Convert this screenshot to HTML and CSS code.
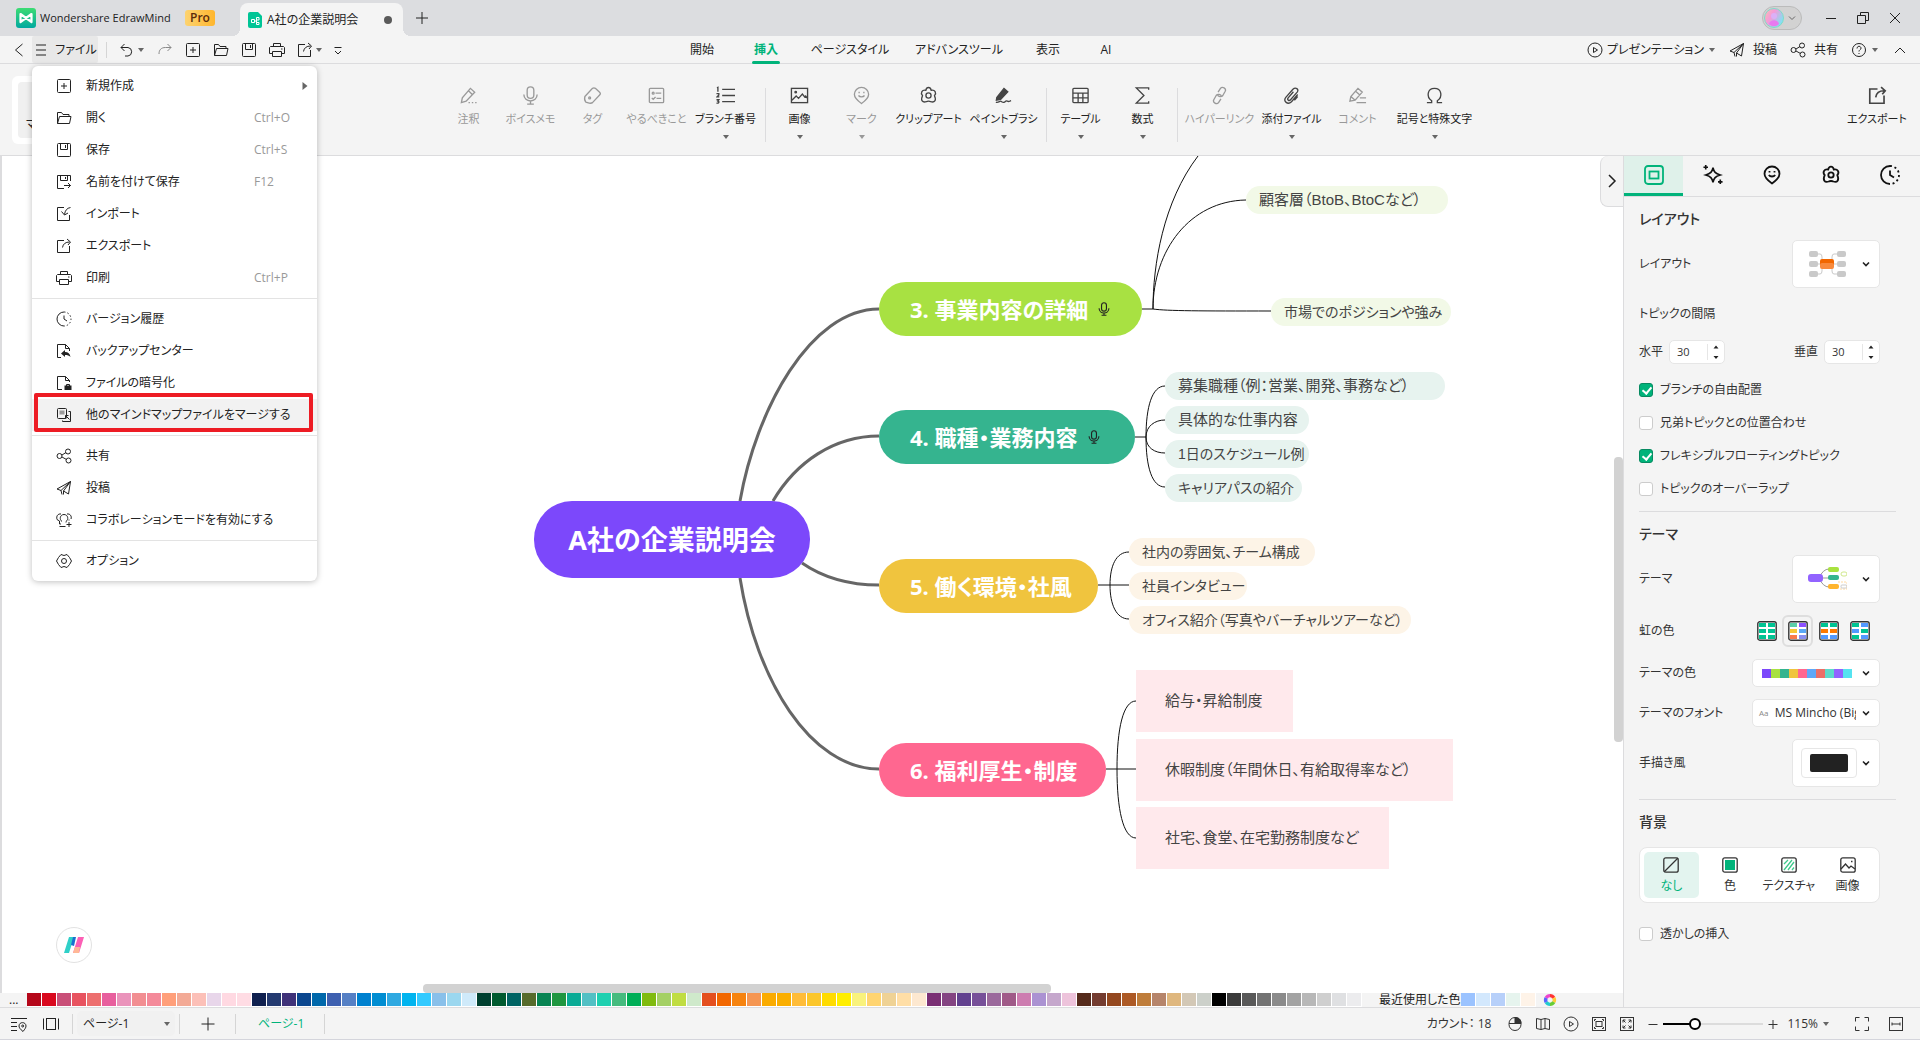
FILE: index.html
```html
<!DOCTYPE html>
<html lang="ja">
<head>
  <meta charset="utf-8">
  <title>Wondershare EdrawMind</title>
  <link rel="stylesheet" href="styles.css">
</head>
<body>
  <!-- Icon sprite -->
  <svg class="sprite" aria-hidden="true">
    <symbol id="i-caret" viewBox="0 0 8 8"><path d="M1 2h6L4 6z" fill="currentColor" stroke="none"/></symbol>
    <symbol id="i-chev" viewBox="0 0 8 8"><path d="M1 2.5l3 3 3-3"/></symbol>
    <symbol id="i-new" viewBox="0 0 16 16"><rect x="1.5" y="1.5" width="13" height="13" rx="1"/><path d="M8 5v6M5 8h6"/></symbol>
    <symbol id="i-open" viewBox="0 0 16 16"><path d="M1.500 13.500v-11h4l1.500 2h6v2M1.500 13.500l2-7h11.500l-1.500 7z"/></symbol>
    <symbol id="i-save" viewBox="0 0 16 16"><rect x="1.500" y="1.500" width="13" height="13" rx="1"/><path d="M4.500 1.500v6h7v-6M9.500 3v3"/></symbol>
    <symbol id="i-saveas" viewBox="0 0 16 16"><path d="M14.500 7V1.500h-13v13H8M4.500 1.500v5h7v-5M9.500 3v2M8 11.500h6.500M12 9l2.500 2.500L12 14"/></symbol>
    <symbol id="i-import" viewBox="0 0 16 16"><path d="M8 1.500H1.500v13h12V9M14.500 1.500C11 2 9 4.500 8.500 8.500M5.500 5.500l3 3.500 3.500-2"/></symbol>
    <symbol id="i-export" viewBox="0 0 16 16"><path d="M8 2.500H1.500v12h12V8M6.500 9.500c.5-3.500 3-5.500 7-5.500M11 1l3.500 3L12 7"/></symbol>
    <symbol id="i-print" viewBox="0 0 16 16"><path d="M4.500 4.500v-3h7v3M3.500 11.500h-3v-6l1-1h13l1 1v6h-3M3.500 9.500h9v5h-9zM12 7h1.500"/></symbol>
    <symbol id="i-history" viewBox="0 0 16 16"><path d="M8 1a7 7 0 1 0 0 14M8 4.500V8l3 2"/><path d="M8 1a7 7 0 0 1 0 14" stroke-dasharray="1.500 2"/></symbol>
    <symbol id="i-backup" viewBox="0 0 16 16"><path d="M5 14.500H1.500v-13h8l4 4V8M9.500 1.500v4h4"/><path d="M5 10.500l4-3.500v2c3 0 5 1.500 5.500 5-1.500-1.500-3-2-5.500-2v2z" fill="currentColor" stroke="none"/></symbol>
    <symbol id="i-lock" viewBox="0 0 16 16"><path d="M6 14.500H1.500v-13h8l4 4V7M9.500 1.500v4h4M10.500 11V9.500h3V11"/><rect x="8.500" y="10.500" width="7" height="4.500" fill="currentColor" stroke="none"/></symbol>
    <symbol id="i-merge" viewBox="0 0 16 16"><rect x="1.500" y="1.500" width="9" height="10" rx="1"/><rect x="3.500" y="3.500" width="5" height="4" fill="#999" stroke="none"/><path d="M12.500 4.500h2v10h-8v-1M9.500 8.500l4 4M9.500 11.500v-3h3"/></symbol>
    <symbol id="i-share" viewBox="0 0 16 16"><circle cx="3.500" cy="8" r="2.500"/><circle cx="12" cy="3.500" r="2.500"/><circle cx="12.500" cy="12.500" r="2.500"/><path d="M6 7l4-2.500M6 9l4.500 2.500"/></symbol>
    <symbol id="i-send" viewBox="0 0 16 16"><path d="M14.500 1.500L1 9l4 1.500L14.500 1.500 12.500 14l-5-3v3.500M5 10.500l1 4M7.500 11l7-9.500"/></symbol>
    <symbol id="i-collab" viewBox="0 0 16 16"><path d="M5 12H3.500V9L1 7.500C0 4 2 1.500 5 2M11 2c3-.5 5 2 4 5M3.500 14.500h6M6 9.500c-3-2-2-7 2-7s5 5 2 7v1M13 10v5M10.500 12.500h5M13 7.500v1"/></symbol>
    <symbol id="i-option" viewBox="0 0 16 16"><path d="M5 1.500l3 1 3-1 2.500 3L15.500 8l-2 3.500-2.500 3-3-1-3 1-2.500-3L.5 8l2-3.500z"/><circle cx="8" cy="8" r="2.500"/></symbol>
    <symbol id="i-undo" viewBox="0 0 16 16"><path d="M5.500 2L2 5.500 5.500 9M2 5.500h7a4.300 4.300 0 0 1 0 8.500H6"/></symbol>
    <symbol id="i-redo" viewBox="0 0 16 16"><path d="M10.500 2L14 5.500 10.500 9M14 5.500H8.500C4 5.500 2 8 2 12"/></symbol>
    <symbol id="i-play" viewBox="0 0 16 16"><circle cx="8" cy="8" r="7"/><path d="M6.500 5.500v5L10.500 8z"/></symbol>
    <symbol id="i-help" viewBox="0 0 16 16"><circle cx="8" cy="8" r="6.500"/><path d="M6 6.500c0-3 4-2.800 4-.3 0 1.500-2 1.500-2 3.300M8 11v1"/></symbol>
    <symbol id="i-note" viewBox="0 0 20 20"><path d="M2.500 17.500l1-5L12 2.500l4.500 4-9 9.500zM10 5l4 4"/><path d="M10 17.500h1.500M13.500 17.500H15M17 17.500h1.500"/></symbol>
    <symbol id="i-mic" viewBox="0 0 20 20"><rect x="6.500" y="1" width="7" height="12" rx="3.500"/><path d="M3 9c0 9 14 9 14 0M10 16v3M6.500 19h7"/></symbol>
    <symbol id="i-tag" viewBox="0 0 20 20"><path d="M2 11l8-8.500c1-.7 2-.7 3 0l4.500 4c1 1 1 2 0 3L10 17.500c-1 .8-2 .8-3.500.5L3 17c-1-1-1.500-4-1-6z"/><circle cx="7" cy="12.500" r="1"/></symbol>
    <symbol id="i-todo" viewBox="0 0 20 20"><rect x="2.500" y="2.500" width="15" height="15" rx="1"/><circle cx="6.500" cy="7.500" r="1"/><path d="M9 7.500h6M5 12.500l1.500 1.500L9 11.500M10 13h5"/></symbol>
    <symbol id="i-num" viewBox="0 0 20 20"><path d="M6.500 3.500H20M6.500 10H20M6.500 16.500H20M1 2l1-.5V6M.5 8h2.500v1.500L1 11.500h2.500M.5 14.500H3L2 16c2 0 1 2.500-1.500 2"/></symbol>
    <symbol id="i-image" viewBox="0 0 20 20"><rect x="1.500" y="2.500" width="17" height="15"/><circle cx="6" cy="6.500" r=".8"/><path d="M2 15l4.500-4.500L9 13l4-4.500 2.500 3 1-1 2 2.500"/></symbol>
    <symbol id="i-mark" viewBox="0 0 20 20"><path d="M10 18.500C5 15 2.500 12 2.500 8.800a7.500 7.300 0 0 1 15 0c0 3.200-2.500 6.200-7.500 9.700z"/><path d="M7.500 6v1.500M12.500 6v1.500M6.800 10c1.500 2 4.900 2 6.400 0"/></symbol>
    <symbol id="i-clip" viewBox="0 0 20 20"><path d="M7.200 4.500C8 .6 12 .6 12.800 4.500c4-.8 6 2.700 3.500 5.700 2.300 5 0 7.600-4 6.300-1-.7-3.600-.7-4.600 0-4 1.300-6.300-1.300-4-6.300C1.200 7.200 3.200 3.700 7.200 4.500z"/><circle cx="10" cy="10" r="2.700"/></symbol>
    <symbol id="i-brush" viewBox="0 0 20 20"><path d="M3 12L10.500 2.500l4 3.500-7.500 8-4.500 1z" fill="currentColor"/><path d="M2 17c2 1 4-1 5-1s2 2 4 1 1-2 3-1 2 0 4-.5"/></symbol>
    <symbol id="i-table" viewBox="0 0 20 20"><rect x="2" y="2.500" width="16" height="15" rx="1"/><path d="M2 7.500h16M2 12.500h16M7.500 7.500v10M12.500 7.500v10"/></symbol>
    <symbol id="i-sigma" viewBox="0 0 20 20"><path d="M16.500 4V2H3.500l8 8-8 8h13v-2"/></symbol>
    <symbol id="i-link" viewBox="0 0 20 20"><path d="M8.500 6.500l2.500-4c2-2.500 6.500 0 5 3l-2.500 4.500c-1.500 2-5 1.500-5.500-1M11.500 13.500l-2.500 4c-2 2.500-6.500 0-5-3l2.500-4.500c1.500-2 5-1.500 5.500 1"/></symbol>
    <symbol id="i-attach" viewBox="0 0 20 20"><path d="M16.500 9l-6.500 7.500c-4 4-9-.5-6-4.500l7.500-8.500c3-3 6.500 0 4.500 3l-7 8c-1.500 1.800-4 0-2.500-2l5.500-6.500M13 15l3.500-4"/></symbol>
    <symbol id="i-comment" viewBox="0 0 20 20"><path d="M2 16l1-5 7.500-8.500 4.500 4L7.500 15zM8 5.500l4.500 4M3 11l4.500 4M12.500 12.500H19M9 17.500h10"/></symbol>
    <symbol id="i-omega" viewBox="0 0 20 20"><path d="M2 17.500h5v-2C1 11.500 2.500 2.500 10 2.500s9 9 3 13v2h5"/></symbol>
    <symbol id="i-panel" viewBox="0 0 20 20"><rect x="1" y="1" width="18" height="18" rx="3"/><rect x="5.500" y="6.500" width="9" height="7"/></symbol>
    <symbol id="i-stars" viewBox="0 0 22 22"><path d="M11 3c1 4.500 2.500 6.500 8 8-5.500 1.500-7 3.500-8 8-1-4.500-2.500-6.500-8-8 5.500-1.500 7-3.500 8-8zM3 0v5M.5 2.500h5M19 16v5M16.500 18.500h5"/></symbol>
    <symbol id="i-clock" viewBox="0 0 20 20"><path d="M10 1a9 9 0 1 0 0 18M10 5.500V10l4 2.500"/><path d="M10 1a9 9 0 0 1 0 18" stroke-dasharray="2 2.700"/></symbol>
    <symbol id="i-none" viewBox="0 0 16 16"><rect x=".8" y=".8" width="14.400" height="14.400" rx="2"/><path d="M1 15L15 1"/></symbol>
    <symbol id="i-fill" viewBox="0 0 16 16"><rect x=".8" y=".8" width="14.400" height="14.400" rx="2"/><path d="M3 3h10v10H3z" fill="#00b37a" stroke="none"/></symbol>
    <symbol id="i-texture" viewBox="0 0 16 16"><rect x=".8" y=".8" width="14.400" height="14.400" rx="2"/><path d="M3 7l4-4M3 13L11 3M7 13l6-8M11 13l2-2.500" stroke="#3fc98c"/></symbol>
    <symbol id="i-pic" viewBox="0 0 16 16"><rect x=".8" y=".8" width="14.400" height="14.400" rx="2"/><path d="M1 12l4.500-5 3.500 4 2-2 4 3M11 4.500h1.500"/></symbol>
    <symbol id="i-outline" viewBox="0 0 16 16"><path d="M0 2.500h16M0 6.500h6M0 10.500h6M0 14.500h6M12 15.500c-3-2.500-4-4-4-5.500 0-4.500 7-4.500 7 0 0 1.500-1 3-3 5.500z"/><circle cx="11.700" cy="10" r="1"/></symbol>
    <symbol id="i-slides" viewBox="0 0 16 16"><rect x="3.500" y="2.500" width="9" height="11"/><path d="M.5 2.500v11M15.500 2.500v11"/></symbol>
    <symbol id="i-mouse" viewBox="0 0 16 16"><rect x="2" y="1.500" width="12" height="13" rx="6"/><path d="M8 1.500c4 0 6 2 6 6H8z" fill="currentColor"/><path d="M2 7.500h12"/></symbol>
    <symbol id="i-map" viewBox="0 0 16 16"><path d="M1.500 2.500l4.500 1 4-1 4.500 1v10l-4.500-1-4 1-4.500-1zM6 3.500v10M10 2.500v10"/></symbol>
    <symbol id="i-fit" viewBox="0 0 16 16"><rect x="1.500" y="1.500" width="13" height="13"/><rect x="5" y="5.500" width="6" height="5"/><path d="M3.500 5V3.500H5M11 3.500h1.500V5M12.500 11v1.500H11M5 12.500H3.500V11"/></symbol>
    <symbol id="i-full" viewBox="0 0 16 16"><rect x="1.500" y="1.500" width="13" height="13"/><path d="M4 6.500V4h2.500M4 4l2.500 2.500M9.500 4H12v2.500M12 4L9.500 6.500M12 9.500V12H9.500M12 12L9.500 9.500M6.500 12H4V9.500M4 12l2.500-2.500"/></symbol>
    <symbol id="i-corners" viewBox="0 0 16 16"><path d="M1.500 5.500v-4h4M10.500 1.500h4v4M14.500 10.500v4h-4M5.500 14.500h-4v-4"/></symbol>
    <symbol id="i-width" viewBox="0 0 16 16"><rect x="1.500" y="1.500" width="13" height="13"/><path d="M4 8h8M4 6.500v3M12 6.500v3"/></symbol>
  </svg>

  <!-- Title bar -->
  <header class="titlebar">
    <svg class="logo" viewBox="0 0 20 20"><defs><linearGradient id="lg" x2="0" y2="1"><stop stop-color="#3ddc73"/><stop offset="1" stop-color="#00a9a0"/></linearGradient></defs><rect width="20" height="20" rx="3" fill="url(#lg)"/><path d="M4.500 14V6l11 8V6l-11 8z" fill="none" stroke="#fff" stroke-width="2.200" stroke-linejoin="round"/></svg>
    <span class="app-name">Wondershare EdrawMind</span>
    <span class="pro">Pro</span>
    <div class="doc-tab">
      <svg class="doc-icon" viewBox="0 0 14 16"><path d="M2 0h8l4 4v10a2 2 0 0 1-2 2H2a2 2 0 0 1-2-2V2a2 2 0 0 1 2-2z" fill="#00c596"/><path d="M3.500 7.500h3v3h-3zM6.500 9H8M8.500 5.500h2.500v2.500H8.500zM8.500 10.500h2.500v2H8.500zM8.500 8v3" fill="none" stroke="#fff"/></svg>
      <span class="doc-name">A社の企業説明会</span>
      <i class="dirty"></i>
    </div>
    <button class="plain add-tab" aria-label="新しいタブ"><svg class="ic" viewBox="0 0 16 16"><path d="M8 2v12M2 8h12"/></svg></button>
    <div class="window-tools">
      <button class="account" aria-label="アカウント"><svg class="avatar" viewBox="0 0 20 20"><defs><linearGradient id="av" x1="0" y1="0" x2="1" y2=".6"><stop stop-color="#f6c2b0"/><stop offset=".45" stop-color="#f59ad8"/><stop offset="1" stop-color="#7fe3f5"/></linearGradient></defs><circle cx="10" cy="10" r="9.500" fill="url(#av)" stroke="#7edcc8"/><circle cx="10" cy="8" r="3" fill="#dcb0f7"/><path d="M5 16c1-5 9-5 10 0-3 3-7 3-10 0z" fill="#e879f0"/></svg><svg class="ic tiny"><use href="#i-chev"/></svg></button>
      <button class="plain" aria-label="最小化"><svg class="ic" viewBox="0 0 16 16"><path d="M3 8.500h10"/></svg></button>
      <button class="plain" aria-label="元に戻す"><svg class="ic" viewBox="0 0 16 16"><path d="M2.500 5.500h8v8h-8zM5.500 5.500v-3h8v8h-3"/></svg></button>
      <button class="plain" aria-label="閉じる"><svg class="ic" viewBox="0 0 16 16"><path d="M3 3l10 10M13 3L3 13"/></svg></button>
    </div>
  </header>

  <!-- Menu bar -->
  <nav class="menubar">
    <div class="quick">
      <button class="plain back" aria-label="戻る"><svg class="ic" viewBox="0 0 16 16"><path d="M11.500 2l-7 6 7 6"/></svg></button>
      <button class="file-btn"><svg class="ic" viewBox="0 0 16 16"><path d="M3 3h10M3 8h10M3 13h10"/></svg>ファイル</button>
      <span class="vsep"></span>
      <button class="plain" aria-label="元に戻す"><svg class="ic"><use href="#i-undo"/></svg><svg class="ic tiny"><use href="#i-caret"/></svg></button>
      <button class="plain dim" aria-label="やり直し"><svg class="ic"><use href="#i-redo"/></svg></button>
      <button class="plain" aria-label="新規"><svg class="ic"><use href="#i-new"/></svg></button>
      <button class="plain" aria-label="開く"><svg class="ic"><use href="#i-open"/></svg></button>
      <button class="plain" aria-label="保存"><svg class="ic"><use href="#i-save"/></svg></button>
      <button class="plain" aria-label="印刷"><svg class="ic"><use href="#i-print"/></svg></button>
      <button class="plain" aria-label="エクスポート"><svg class="ic"><use href="#i-export"/></svg><svg class="ic tiny"><use href="#i-caret"/></svg></button>
      <button class="plain customize" aria-label="カスタマイズ"><svg class="ic" viewBox="0 0 16 16"><path d="M4.500 5.500h7M5 9l3 3 3-3"/></svg></button>
    </div>
    <div class="tabs">
      <a href="#">開始</a>
      <a href="#" class="active">挿入</a>
      <a href="#" class="t-lg">ページスタイル</a>
      <a href="#" class="t-xl">アドバンスツール</a>
      <a href="#">表示</a>
      <a href="#" class="t-sm">AI</a>
    </div>
    <div class="menu-right">
      <button class="plain present"><svg class="ic"><use href="#i-play"/></svg>プレゼンテーション<svg class="ic tiny"><use href="#i-caret"/></svg></button>
      <button class="plain"><svg class="ic"><use href="#i-send"/></svg>投稿</button>
      <button class="plain"><svg class="ic"><use href="#i-share"/></svg>共有</button>
      <button class="plain help" aria-label="ヘルプ"><svg class="ic"><use href="#i-help"/></svg><svg class="ic tiny"><use href="#i-caret"/></svg></button>
      <button class="plain" aria-label="折りたたむ"><svg class="ic" viewBox="0 0 16 16"><path d="M3 11l5-5 5 5"/></svg></button>
    </div>
  </nav>

  <!-- Ribbon -->
  <div class="ribbon">
    <div class="mode-box"><button class="mode">マ</button></div>
    <div class="tools">
      <button class="tool off"><svg class="ic"><use href="#i-note"/></svg>注釈</button>
      <button class="tool off"><svg class="ic"><use href="#i-mic"/></svg>ボイスメモ</button>
      <button class="tool off"><svg class="ic"><use href="#i-tag"/></svg>タグ</button>
      <button class="tool off w-md"><svg class="ic"><use href="#i-todo"/></svg>やるべきこと</button>
      <button class="tool w-lg"><svg class="ic"><use href="#i-num"/></svg>ブランチ番号<svg class="ic tiny"><use href="#i-caret"/></svg></button>
      <span class="rsep"></span>
      <button class="tool"><svg class="ic"><use href="#i-image"/></svg>画像<svg class="ic tiny"><use href="#i-caret"/></svg></button>
      <button class="tool off"><svg class="ic"><use href="#i-mark"/></svg>マーク<svg class="ic tiny"><use href="#i-caret"/></svg></button>
      <button class="tool w-lg"><svg class="ic"><use href="#i-clip"/></svg>クリップアート</button>
      <button class="tool w-xl"><svg class="ic"><use href="#i-brush"/></svg>ペイントブラシ<svg class="ic tiny"><use href="#i-caret"/></svg></button>
      <span class="rsep"></span>
      <button class="tool"><svg class="ic"><use href="#i-table"/></svg>テーブル<svg class="ic tiny"><use href="#i-caret"/></svg></button>
      <button class="tool"><svg class="ic"><use href="#i-sigma"/></svg>数式<svg class="ic tiny"><use href="#i-caret"/></svg></button>
      <span class="rsep"></span>
      <button class="tool off w-xl"><svg class="ic"><use href="#i-link"/></svg>ハイパーリンク</button>
      <button class="tool w-md"><svg class="ic"><use href="#i-attach"/></svg>添付ファイル<svg class="ic tiny"><use href="#i-caret"/></svg></button>
      <button class="tool off w-md"><svg class="ic"><use href="#i-comment"/></svg>コメント</button>
      <button class="tool w-xxl"><svg class="ic"><use href="#i-omega"/></svg>記号と特殊文字<svg class="ic tiny"><use href="#i-caret"/></svg></button>
    </div>
    <button class="tool w-xl export"><svg class="ic"><use href="#i-export"/></svg>エクスポート</button>
  </div>

  <main class="workspace">
    <div class="stage">
      <div class="canvas">
        <svg class="links">
          <g class="trunk">
            <path d="M738 345C754 254 808 153 877 153"/>
            <path d="M771 345C794 306 832 280 877 280"/>
            <path d="M800 407C823 423 848 429 877 429"/>
            <path d="M738 422C754 523 808 613 877 613"/>
          </g>
          <g class="twig">
            <path d="M1140 153h11C1151 109 1161 46 1196 0M1151 153C1151 94 1188 45 1244 44M1151 153C1165 155 1200 155 1269 155"/>
            <path d="M1133 281h11M1163 230C1150 230 1144 251 1144 281S1150 331 1163 331M1163 264C1153 264 1144 270 1144 281S1153 297 1163 297"/>
            <path d="M1096 429h31M1127 396C1114 396 1108 410 1108 429S1114 463 1127 463"/>
            <path d="M1104 613h30M1134 545C1121 545 1115 573 1115 613S1121 682 1134 682"/>
          </g>
        </svg>
        <div class="node root">A社の企業説明会</div>

        <div class="node branch b3">3. 事業内容の詳細<svg class="ic"><use href="#i-mic"/></svg></div>
        <div class="node leaf lime l31">顧客層（BtoB、BtoCなど）</div>
        <div class="node leaf lime dense l32">市場でのポジションや強み</div>

        <div class="node branch b4">4. 職種・業務内容<svg class="ic"><use href="#i-mic"/></svg></div>
        <div class="node leaf mint l41">募集職種（例：営業、開発、事務など）</div>
        <div class="node leaf mint l42">具体的な仕事内容</div>
        <div class="node leaf mint dense l43">1日のスケジュール例</div>
        <div class="node leaf mint dense l44">キャリアパスの紹介</div>

        <div class="node branch b5">5. 働く環境・社風</div>
        <div class="node leaf cream dense l51">社内の雰囲気、チーム構成</div>
        <div class="node leaf cream dense l52">社員インタビュー</div>
        <div class="node leaf cream dense l53">オフィス紹介（写真やバーチャルツアーなど）</div>

        <div class="node branch b6">6. 福利厚生・制度</div>
        <div class="node leaf pink l61">給与・昇給制度</div>
        <div class="node leaf pink l62">休暇制度（年間休日、有給取得率など）</div>
        <div class="node leaf pink l63">社宅、食堂、在宅勤務制度など</div>

        <button class="ai-btn" aria-label="AI"><svg viewBox="0 0 20 16"><path d="M5 0h5L5 16H0z" fill="#2fd0c8"/><path d="M9 0h3l-2 9-3-1z" fill="#1a6fd0"/><path d="M14 0h6l-5 16H9z" fill="#fc5fb5"/><path d="M11 10h5l-1 6H9z" fill="#ffb896"/></svg></button>
        <button class="collapse" aria-label="パネルを閉じる"><svg class="ic" viewBox="0 0 16 16"><path d="M5 2l6 6-6 6"/></svg></button>
        <div class="scroll-v"></div>
        <div class="scroll-h"></div>
      </div>
      <div class="palette">
        <button class="plain more">...</button>
        <div class="swatches" id="swatches"></div>
        <span class="recent-label">最近使用した色</span>
        <div class="swatches" id="recent"></div>
        <svg class="wheel" viewBox="0 0 16 16"><g fill="none" stroke-width="4"><path d="M8 3a5 5 0 0 1 4.300 2.500" stroke="#f33"/><path d="M12.300 5.500a5 5 0 0 1 0 5" stroke="#fc3"/><path d="M12.300 10.500A5 5 0 0 1 8 13" stroke="#6c3"/><path d="M8 13a5 5 0 0 1-4.300-2.500" stroke="#2cc"/><path d="M3.700 10.500a5 5 0 0 1 0-5" stroke="#56f"/><path d="M3.700 5.500A5 5 0 0 1 8 3" stroke="#e4c"/></g></svg>
      </div>
    </div>

    <!-- Format panel -->
    <aside class="panel">
      <div class="panel-tabs">
        <button class="active" aria-label="ページ"><svg class="ic"><use href="#i-panel"/></svg></button>
        <button aria-label="AI"><svg class="ic"><use href="#i-stars"/></svg></button>
        <button aria-label="マーク"><svg class="ic"><use href="#i-mark"/></svg></button>
        <button aria-label="クリップアート"><svg class="ic"><use href="#i-clip"/></svg></button>
        <button aria-label="履歴"><svg class="ic"><use href="#i-clock"/></svg></button>
      </div>

      <section>
        <h3>レイアウト</h3>
        <div class="row flush">
          <span>レイアウト</span>
          <button class="pick tall" aria-label="レイアウト">
            <svg class="thumb" viewBox="0 0 40 28"><path d="M10 4h3q2 0 2 3v14q0 3-2 3h-3M30 4h-3q-2 0-2 3v14q0 3 2 3h3M10 14h20" fill="none" stroke="#c9c9c9"/><g fill="#c9c9c9"><rect x="2" y="1" width="9" height="6" rx="2"/><rect x="2" y="11" width="9" height="6" rx="2"/><rect x="2" y="21" width="9" height="6" rx="2"/><rect x="30" y="1" width="9" height="6" rx="2"/><rect x="30" y="11" width="9" height="6" rx="2"/><rect x="30" y="21" width="9" height="6" rx="2"/></g><rect x="13" y="9" width="14" height="7" rx="2" fill="#f26700"/><rect x="13" y="13" width="14" height="6" rx="2" fill="#f98a3c"/></svg>
            <svg class="ic tiny"><use href="#i-chev"/></svg>
          </button>
        </div>
        <h4>トピックの間隔</h4>
        <div class="row spins">
          <label for="gapX">水平</label>
          <span class="spin"><input type="number" id="gapX" value="30"><svg viewBox="0 0 8 16"><path d="M1.500 4.500h5L4 1.500zM1.500 12h5L4 15z"/></svg></span>
          <label for="gapY" class="second">垂直</label>
          <span class="spin"><input type="number" id="gapY" value="30"><svg viewBox="0 0 8 16"><path d="M1.500 4.500h5L4 1.500zM1.500 12h5L4 15z"/></svg></span>
        </div>
        <label class="check"><input type="checkbox" checked>ブランチの自由配置</label>
        <label class="check"><input type="checkbox">兄弟トピックとの位置合わせ</label>
        <label class="check"><input type="checkbox" checked>フレキシブルフローティングトピック</label>
        <label class="check"><input type="checkbox">トピックのオーバーラップ</label>
      </section>

      <section>
        <h3>テーマ</h3>
        <div class="row flush">
          <span>テーマ</span>
          <button class="pick tall" aria-label="テーマ">
            <svg class="thumb" viewBox="0 0 40 28"><path d="M12 13q4-9 10-9M12 13h10M12 13q4 9 10 9" fill="none" stroke="#999"/><rect x="1" y="9" width="15" height="8" rx="3" fill="#9263ff"/><rect x="21" y="2" width="11" height="5" rx="2" fill="#a8e23f"/><rect x="21" y="10" width="11" height="5" rx="2" fill="#34b48f"/><rect x="21" y="19" width="11" height="5" rx="2" fill="#ffb52e"/><rect x="34" y="7" width="6" height="4" rx="2" fill="none" stroke="#cfe88a"/><path d="M31 17h9v7h-7" fill="none" stroke="#ffd9a0" stroke-dasharray="2 1"/><rect x="34" y="20" width="6" height="3" rx="1" fill="none" stroke="#ccc"/></svg>
            <svg class="ic tiny"><use href="#i-chev"/></svg>
          </button>
        </div>
        <div class="row">
          <span>虹の色</span>
          <div class="rainbow">
            <button aria-label="単色"><svg viewBox="0 0 20 20"><rect x=".8" y=".8" width="18.400" height="18.400" rx="2"/><path d="M2 4h16M2 10h16M2 16h16" stroke="#00c493"/></svg></button>
            <button class="on" aria-label="虹色"><svg viewBox="0 0 20 20"><rect x=".8" y=".8" width="18.400" height="18.400" rx="2"/><path d="M2 4h8" stroke="#5bcfa8"/><path d="M11 4h7" stroke="#8b50ff"/><path d="M2 10h8" stroke="#f6c835"/><path d="M11 10h7" stroke="#5aa8f5"/><path d="M2 16h8" stroke="#f97b4a"/><path d="M11 16h7" stroke="#8a90f0"/></svg></button>
            <button aria-label="行ごと"><svg viewBox="0 0 20 20"><rect x=".8" y=".8" width="18.400" height="18.400" rx="2"/><path d="M2 4h16" stroke="#00c493"/><path d="M2 10h16" stroke="#ff7a00"/><path d="M2 16h16" stroke="#5299ff"/></svg></button>
            <button aria-label="交互"><svg viewBox="0 0 20 20"><rect x=".8" y=".8" width="18.400" height="18.400" rx="2"/><path d="M2 4h8M11 10h7M2 16h8" stroke="#00c493"/><path d="M11 4h7M2 10h8M11 16h7" stroke="#5299ff"/></svg></button>
          </div>
        </div>
        <div class="row">
          <span>テーマの色</span>
          <button class="pick wide" aria-label="テーマの色"><span class="strip" id="themeColors"></span><svg class="ic tiny"><use href="#i-chev"/></svg></button>
        </div>
        <div class="row">
          <label for="themeFont">テーマのフォント</label>
          <div class="pick wide font"><span class="aa">Aa</span><select id="themeFont"><option>MS Mincho (Big)</option></select><svg class="ic tiny"><use href="#i-chev"/></svg></div>
        </div>
        <div class="row">
          <span>手描き風</span>
          <button class="pick tall" aria-label="手描き風"><span class="ink"><i></i></span><svg class="ic tiny"><use href="#i-chev"/></svg></button>
        </div>
      </section>

      <section>
        <h3>背景</h3>
        <div class="bg-types">
          <button class="on"><svg class="ic"><use href="#i-none"/></svg>なし</button>
          <button><svg class="ic"><use href="#i-fill"/></svg>色</button>
          <button><svg class="ic"><use href="#i-texture"/></svg>テクスチャ</button>
          <button><svg class="ic"><use href="#i-pic"/></svg>画像</button>
        </div>
        <label class="check"><input type="checkbox">透かしの挿入</label>
      </section>
    </aside>
  </main>

  <!-- Status bar -->
  <footer class="status">
    <button class="plain" aria-label="アウトライン"><svg class="ic"><use href="#i-outline"/></svg></button>
    <button class="plain" aria-label="スライド"><svg class="ic"><use href="#i-slides"/></svg></button>
    <span class="vsep"></span>
    <div class="page-select"><select aria-label="ページ"><option>ページ-1</option></select><svg class="ic tiny"><use href="#i-caret"/></svg></div>
    <span class="vsep"></span>
    <button class="plain add-page" aria-label="ページを追加"><svg class="ic" viewBox="0 0 16 16"><path d="M8 1.500v13M1.500 8h13"/></svg></button>
    <span class="vsep"></span>
    <a href="#" class="page-tab">ページ-1</a>
    <span class="vsep"></span>
    <div class="status-right">
      <span class="count">カウント： 18</span>
      <button class="plain" aria-label="マウス"><svg class="ic"><use href="#i-mouse"/></svg></button>
      <button class="plain" aria-label="マップ"><svg class="ic"><use href="#i-map"/></svg></button>
      <button class="plain" aria-label="再生"><svg class="ic"><use href="#i-play"/></svg></button>
      <button class="plain" aria-label="合わせる"><svg class="ic"><use href="#i-fit"/></svg></button>
      <button class="plain" aria-label="全体表示"><svg class="ic"><use href="#i-full"/></svg></button>
      <div class="zoom">
        <button class="plain" aria-label="縮小"><svg class="ic" viewBox="0 0 12 12"><path d="M1.500 6.500h9"/></svg></button>
        <input type="range" min="0" max="100" value="29" aria-label="ズーム">
        <button class="plain" aria-label="拡大"><svg class="ic" viewBox="0 0 12 12"><path d="M1.500 6.500h9M6 2v9"/></svg></button>
        <button class="plain percent">115%<svg class="ic tiny"><use href="#i-caret"/></svg></button>
      </div>
      <button class="plain corners" aria-label="全画面"><svg class="ic"><use href="#i-corners"/></svg></button>
      <button class="plain" aria-label="幅に合わせる"><svg class="ic"><use href="#i-width"/></svg></button>
    </div>
  </footer>

  <!-- File menu -->
  <div class="file-menu">
    <button><svg class="ic"><use href="#i-new"/></svg>新規作成<svg class="ic tiny sub" viewBox="0 0 8 8"><path d="M1.500 0v8l5-4z" fill="currentColor" stroke="none"/></svg></button>
    <button><svg class="ic"><use href="#i-open"/></svg>開く<kbd>Ctrl+O</kbd></button>
    <button><svg class="ic"><use href="#i-save"/></svg>保存<kbd>Ctrl+S</kbd></button>
    <button><svg class="ic"><use href="#i-saveas"/></svg>名前を付けて保存<kbd>F12</kbd></button>
    <button><svg class="ic"><use href="#i-import"/></svg>インポート</button>
    <button><svg class="ic"><use href="#i-export"/></svg>エクスポート</button>
    <button><svg class="ic"><use href="#i-print"/></svg>印刷<kbd>Ctrl+P</kbd></button>
    <hr>
    <button><svg class="ic"><use href="#i-history"/></svg>バージョン履歴</button>
    <button><svg class="ic"><use href="#i-backup"/></svg>バックアップセンター</button>
    <button><svg class="ic"><use href="#i-lock"/></svg>ファイルの暗号化</button>
    <button class="marked"><svg class="ic"><use href="#i-merge"/></svg>他のマインドマップファイルをマージする</button>
    <hr>
    <button><svg class="ic"><use href="#i-share"/></svg>共有</button>
    <button><svg class="ic"><use href="#i-send"/></svg>投稿</button>
    <button><svg class="ic"><use href="#i-collab"/></svg>コラボレーションモードを有効にする</button>
    <hr>
    <button><svg class="ic"><use href="#i-option"/></svg>オプション</button>
  </div>

  <script src="palette.js"></script>
</body>
</html>
```

FILE: styles.css
```css
:root {
  --green: #00b37a;
  --bar: #f4f4f4;
  --line: #dcdcde;
  --text: #222;
  --control: #e6e6e6;
}

* {
  box-sizing: border-box;
}

body {
  margin: 0;
  height: 100vh;
  display: flex;
  flex-direction: column;
  overflow: hidden;
  background: var(--bar);
  color: var(--text);
  font-family: "Open Sans", "Noto Sans CJK JP", sans-serif;
  font-size: 12px;
  line-height: 16px;
  font-feature-settings: "palt";
}

button,
input,
select {
  font: inherit;
  font-feature-settings: inherit;
  color: inherit;
  margin: 0;
}

button {
  padding: 0;
  border: none;
  background: none;
  white-space: nowrap;
  cursor: pointer;
}

a {
  color: inherit;
  text-decoration: none;
}

.sprite {
  display: none;
}

.ic {
  width: 16px;
  height: 16px;
  flex: none;
  fill: none;
  stroke: currentColor;
  overflow: visible;
}

.tiny {
  width: 8px;
  height: 8px;
  color: #666;
}

.plain {
  display: flex;
  align-items: center;
}

.vsep {
  width: 1px;
  height: 16px;
  background: #d5d5d5;
}

/* Title bar */
.titlebar {
  height: 36px;
  flex: none;
  display: flex;
  align-items: center;
  padding: 0 17px 0 16px;
  background: #dcdde0;
}

.logo {
  width: 20px;
  height: 20px;
  margin-right: 4px;
}

.app-name {
  width: 145px;
  font-size: 11px;
  white-space: nowrap;
}

.pro {
  width: 30px;
  height: 16px;
  border-radius: 3px;
  background: linear-gradient(90deg, #fdd370, #ffb62e);
  color: #5c2b0c;
  font-weight: 600;
  line-height: 16px;
  text-align: center;
}

.doc-tab {
  position: relative;
  align-self: flex-end;
  width: 163px;
  height: 33px;
  margin-left: 25px;
  padding: 0 11px 0 8px;
  display: flex;
  align-items: center;
  border-radius: 8px 8px 0 0;
  background: var(--bar);
}

.doc-tab::before,
.doc-tab::after {
  content: "";
  position: absolute;
  bottom: 0;
  width: 8px;
  height: 8px;
}

.doc-tab::before {
  left: -8px;
  background: radial-gradient(circle at 0 0, transparent 8px, var(--bar) 8px);
}

.doc-tab::after {
  right: -8px;
  background: radial-gradient(circle at 100% 0, transparent 8px, var(--bar) 8px);
}

.doc-icon {
  width: 14px;
  height: 16px;
  margin-right: 5px;
}

.doc-name {
  flex: 1;
  white-space: nowrap;
}

.dirty {
  width: 8px;
  height: 8px;
  border-radius: 50%;
  background: #5a5a5a;
}

.add-tab {
  margin-left: 11px;
}

.window-tools {
  margin-left: auto;
  display: flex;
  align-items: center;
  gap: 16px;
}

.account {
  width: 40px;
  height: 24px;
  margin-right: 5px;
  padding: 0 5px 0 1px;
  display: flex;
  align-items: center;
  justify-content: space-between;
  border: 1px solid #bbb;
  border-radius: 12px;
  background: #d2d2d2;
}

.avatar {
  width: 20px;
  height: 20px;
}

/* Menu bar */
.menubar {
  height: 28px;
  flex: none;
  display: flex;
  border-bottom: 1px solid var(--line);
}

.quick {
  width: 35%;
  display: flex;
  align-items: center;
  gap: 12px;
  padding-left: 11px;
}

.quick .plain {
  gap: 2px;
}

.quick .back {
  margin-right: -7px;
}

.quick .vsep {
  margin-left: -4px;
}

.quick .customize {
  margin-left: -5px;
}

.file-btn {
  width: 66px;
  height: 27px;
  display: flex;
  align-items: center;
  justify-content: center;
  gap: 6px;
  background: #e8e8e8;
  border-radius: 2px;
}

.dim {
  color: #888;
}

.tabs {
  flex: 1;
  display: flex;
  gap: 22px;
  padding-left: 9px;
}

.tabs a {
  position: relative;
  width: 42px;
  line-height: 27px;
  text-align: center;
  white-space: nowrap;
}

.tabs .t-sm {
  width: 30px;
}

.tabs .t-lg {
  width: 82px;
}

.tabs .t-xl {
  width: 92px;
}

.tabs .active {
  color: var(--green);
  font-weight: 700;
}

.tabs .active::after {
  content: "";
  position: absolute;
  left: 7px;
  right: 7px;
  bottom: -1px;
  height: 3px;
  border-radius: 2px;
  background: var(--green);
}

.menu-right {
  display: flex;
  align-items: center;
  gap: 13px;
  padding-right: 12px;
}

.menu-right .plain {
  gap: 8px;
}

.menu-right .present,
.menu-right .help {
  gap: 4px;
}

/* Ribbon */
.ribbon {
  height: 92px;
  flex: none;
  display: grid;
  grid-template-columns: 1fr auto 1fr;
  border-bottom: 1px solid var(--line);
}

.mode-box {
  width: 90px;
  height: 68px;
  margin: 12px 0 0 12px;
  padding: 6px;
  border-radius: 6px;
  background: #fff;
}

.mode {
  width: 100%;
  height: 100%;
  padding: 30px 8px 0;
  border-radius: 4px;
  background: #f0f0f0;
  text-align: left;
}

.tools {
  display: flex;
  margin-right: 4px;
}

.tool {
  width: 62px;
  display: flex;
  flex-direction: column;
  align-items: center;
  padding-top: 22px;
  gap: 7px;
  font-size: 11px;
  line-height: 14px;
}

.tool .ic {
  width: 19px;
  height: 19px;
  color: #444;
  stroke-width: 1.4;
}

.tool .tiny {
  width: 8px;
  height: 8px;
  color: #666;
}

.tool.off,
.tool.off .ic {
  color: #999;
}

.w-md {
  width: 66px;
}

.w-lg {
  width: 72px;
}

.w-xl {
  width: 78px;
}

.w-xxl {
  width: 88px;
}

.rsep {
  width: 1px;
  height: 54px;
  margin: 24px 3px 0;
  background: var(--line);
}

.export {
  justify-self: end;
  margin-right: 4px;
}

/* Workspace */
.workspace {
  flex: 1;
  min-height: 0;
  display: flex;
}

.stage {
  flex: 1;
  min-width: 0;
  display: flex;
  flex-direction: column;
}

.canvas {
  flex: 1;
  position: relative;
  overflow: hidden;
  border-left: 2px solid var(--line);
  background: #fff;
}

.links {
  position: absolute;
  inset: 0;
  width: 100%;
  height: 100%;
  fill: none;
}

.trunk {
  stroke: #666;
  stroke-width: 3;
}

.twig {
  stroke: #111;
  stroke-width: 1;
}

.node {
  position: absolute;
  display: flex;
  align-items: center;
  white-space: nowrap;
  font-family: "Noto Sans", "Noto Sans CJK JP", sans-serif;
}

.root {
  left: 532px;
  top: 345px;
  width: 276px;
  height: 77px;
  justify-content: center;
  border-radius: 38px;
  background: #7c48fb;
  color: #fff;
  font-size: 27px;
  font-weight: 700;
}

.branch {
  left: 877px;
  height: 54px;
  padding-left: 31px;
  border-radius: 27px;
  color: #fff;
  font-size: 22px;
  font-weight: 700;
}

.branch .ic {
  width: 14px;
  height: 14px;
  margin-left: 9px;
  color: #222;
  stroke-width: 1.6;
}

.b3 { top: 126px; width: 263px; background: #a8e142; }
.b4 { top: 254px; width: 256px; background: #35b48f; }
.b5 { top: 403px; width: 219px; background: #f0c43e; }
.b6 { top: 587px; width: 227px; background: #ff6790; }

.leaf {
  height: 28px;
  padding-left: 13px;
  border-radius: 14px;
  color: #444;
  font-family: "Liberation Sans", "Noto Sans CJK JP", sans-serif;
  font-size: 15px;
}

.dense {
  font-size: 14px;
}

.lime { background: #f2f9e7; }
.mint { background: #e7f3ef; left: 1163px; }
.cream { background: #fdf4e7; left: 1127px; }

.pink {
  left: 1134px;
  height: 62px;
  padding-left: 29px;
  border-radius: 0;
  background: #ffe9ec;
}

.l31 { left: 1244px; top: 30px; width: 202px; }
.l32 { left: 1269px; top: 142px; width: 180px; }
.l41 { top: 216px; width: 280px; }
.l42 { top: 250px; width: 144px; }
.l43 { top: 284px; width: 144px; }
.l44 { top: 318px; width: 137px; }
.l51 { top: 382px; width: 186px; }
.l52 { top: 416px; width: 118px; }
.l53 { top: 450px; width: 282px; }
.l61 { top: 514px; width: 157px; }
.l62 { top: 583px; width: 317px; }
.l63 { top: 651px; width: 253px; }

.ai-btn {
  position: absolute;
  left: 54px;
  bottom: 30px;
  width: 36px;
  height: 36px;
  display: flex;
  align-items: center;
  justify-content: center;
  border: 1px solid #e2e2e2;
  border-radius: 50%;
  background: #fff;
}

.ai-btn svg {
  width: 20px;
  height: 16px;
}

.collapse {
  position: absolute;
  top: 0;
  right: 0;
  width: 23px;
  height: 51px;
  display: flex;
  align-items: center;
  justify-content: center;
  border: 1px solid var(--line);
  border-width: 0 0 1px 1px;
  border-radius: 8px 0 0 8px;
  background: var(--bar);
}

.collapse .ic {
  stroke-width: 1.5;
}

.scroll-v,
.scroll-h {
  position: absolute;
  border-radius: 4px;
  background: #d2d2d2;
}

.scroll-v {
  top: 36%;
  right: 0;
  width: 9px;
  height: 34%;
}

.scroll-h {
  left: 26%;
  bottom: 0;
  width: 628px;
  height: 9px;
}

/* Colour palette */
.palette {
  height: 14px;
  display: flex;
}

.more {
  width: 27px;
  padding-left: 9px;
  line-height: 12px;
}

.swatches {
  display: flex;
  gap: 1px;
  padding-right: 1px;
  background: #fff;
}

.swatches i {
  width: 14px;
  height: 13px;
}

.recent-label {
  width: 85px;
  margin-left: 14px;
  padding-left: 3px;
  white-space: nowrap;
  line-height: 13px;
}

.wheel {
  width: 14px;
  height: 14px;
  margin-left: 7px;
}

/* Format panel */
.panel {
  width: 297px;
  flex: none;
  border-left: 1px solid var(--line);
}

.panel-tabs {
  height: 41px;
  display: flex;
  border-bottom: 1px solid var(--line);
}

.panel-tabs button {
  flex: 1;
  display: flex;
  align-items: center;
  justify-content: center;
  border-bottom: 3px solid transparent;
  color: #111;
}

.panel-tabs .ic {
  width: 20px;
  height: 20px;
  stroke-width: 1.8;
}

.panel-tabs .active {
  border-color: var(--green);
  background: #dff1ea;
  color: var(--green);
}

.panel section {
  margin: 0 24px 0 15px;
  padding-bottom: 12px;
  border-bottom: 1px solid var(--line);
  color: #333;
}

.panel section:nth-of-type(1) {
  padding-bottom: 6px;
}

.panel section:last-child {
  border-bottom: none;
}

.panel h3 {
  margin: 0;
  font-size: 14px;
  font-weight: 500;
  line-height: 43px;
}

.panel h4 {
  margin: 0;
  font-weight: 400;
  line-height: 52px;
}

.row {
  display: flex;
  align-items: center;
  justify-content: space-between;
  margin: 12px 16px 0 0;
}

.row.flush {
  margin-top: 0;
}

.pick {
  height: 28px;
  display: flex;
  align-items: center;
  justify-content: space-between;
  padding: 0 9px;
  border: 1px solid var(--control);
  border-radius: 5px;
  background: #fff;
}

.pick .tiny {
  color: #222;
  stroke-width: 1.6;
}

.pick.tall {
  width: 88px;
  height: 48px;
}

.pick.wide {
  width: 128px;
}

.thumb {
  width: 40px;
  height: 28px;
  margin-left: 5px;
}

.row.spins {
  justify-content: flex-start;
  margin-top: 0;
  margin-bottom: 9px;
}

.spins .second {
  margin-left: auto;
}

.spin {
  width: 56px;
  height: 24px;
  margin-left: 6px;
  display: flex;
  align-items: center;
  border: 1px solid var(--control);
  border-radius: 5px;
  background: #fff;
}

.spin input {
  width: 38px;
  height: 16px;
  padding: 0 0 0 7px;
  border: none;
  border-right: 1px solid var(--control);
  background: none;
  outline: none;
  font-size: 11px;
  appearance: textfield;
}

.spin input::-webkit-inner-spin-button {
  appearance: none;
  margin: 0;
}

.spin svg {
  width: 8px;
  height: 16px;
  margin-left: 4px;
  fill: #222;
}

.check {
  height: 33px;
  display: flex;
  align-items: center;
  gap: 7px;
  white-space: nowrap;
}

.check input {
  appearance: none;
  width: 14px;
  height: 14px;
  border: 1px solid #ccc;
  border-radius: 3px;
  background: #fff;
}

.check input:checked {
  border-color: #078a61;
  background: var(--green);
}

.check input:checked::after {
  content: "";
  display: block;
  width: 4px;
  height: 7px;
  margin: 1px 0 0 4px;
  border: solid #fff;
  border-width: 0 2px 2px 0;
  transform: rotate(40deg);
}

.rainbow {
  display: flex;
  margin-right: 5px;
}

.rainbow button {
  width: 31px;
  height: 32px;
  display: flex;
  align-items: center;
  justify-content: center;
  border: 2px solid transparent;
  border-radius: 6px;
}

.rainbow .on {
  border-color: #dedede;
}

.rainbow svg {
  width: 20px;
  height: 20px;
  flex: none;
  fill: #fff;
  stroke: #333;
  stroke-width: 1.4;
}

.rainbow path {
  stroke-width: 4;
  stroke-dasharray: 7 2;
}

.strip {
  display: flex;
}

.strip i {
  width: 9px;
  height: 9px;
}

.pick.font {
  padding-left: 6px;
}

.aa {
  color: #888;
  font-size: 8px;
}

.font select {
  width: 81px;
  height: 20px;
  padding: 0;
  border: none;
  background: none;
  appearance: none;
  outline: none;
  text-overflow: clip;
}

.ink {
  width: 56px;
  height: 30px;
  margin-left: -1px;
  padding: 5px 8px;
  border: 1px solid var(--control);
  border-radius: 4px;
}

.ink i {
  display: block;
  height: 18px;
  border-radius: 2px;
  background: #222;
}

.bg-types {
  height: 56px;
  display: flex;
  gap: 4px;
  margin: 4px 16px 14px 0;
  padding: 4px;
  border: 1px solid var(--control);
  border-radius: 8px;
  background: #fff;
}

.bg-types button {
  flex: 1;
  display: flex;
  flex-direction: column;
  align-items: center;
  justify-content: center;
  gap: 5px;
  border-radius: 5px;
}

.bg-types .ic {
  color: #333;
  stroke-width: 1.3;
}

.bg-types .on {
  background: #e3f4ef;
  color: var(--green);
}

/* Status bar */
.status {
  height: 33px;
  flex: none;
  display: flex;
  align-items: center;
  padding: 0 16px 0 11px;
  border-top: 1px solid var(--line);
  border-bottom: 1px solid #d4d5dc;
}

.status > .plain {
  margin-right: 16px;
}

.status .vsep {
  height: 20px;
}

.status > .plain + .vsep {
  margin-left: -3px;
}

.page-select {
  width: 98px;
  height: 25px;
  margin: 0 4px;
  padding: 0 4px 0 6px;
  display: flex;
  align-items: center;
  border-radius: 5px;
  background: #f1f1f1;
}

.page-select select {
  flex: 1;
  padding: 0;
  border: none;
  background: none;
  appearance: none;
  outline: none;
}

.status .add-page {
  margin: 0 22px 0 20px;
}

.page-tab {
  padding: 0 20px 0 22px;
  color: var(--green);
}

.status-right {
  margin-left: auto;
  display: flex;
  align-items: center;
  gap: 12px;
  color: #333;
}

.count {
  margin-right: 4px;
}

.zoom {
  display: flex;
  align-items: center;
  gap: 4px;
}

.zoom .ic {
  width: 12px;
  height: 12px;
}

.zoom input {
  width: 100px;
  height: 14px;
  appearance: none;
  background: linear-gradient(90deg, #000 30%, #dcdcdc 30%) center / 100% 2px no-repeat;
}

.zoom input::-webkit-slider-thumb {
  appearance: none;
  width: 12px;
  height: 12px;
  border: 2px solid #000;
  border-radius: 50%;
  background: #fff;
}

.zoom .percent {
  gap: 4px;
  margin-left: 4px;
}

.percent .tiny {
  width: 8px;
  height: 8px;
}

.corners {
  margin: 0 6px 0 12px;
}

/* File menu */
.file-menu {
  position: absolute;
  left: 32px;
  top: 66px;
  width: 285px;
  padding: 4px 0;
  border-radius: 6px;
  background: #fff;
  box-shadow: 0 1px 6px rgba(0, 0, 0, 0.25);
}

.file-menu button {
  position: relative;
  width: 100%;
  height: 32px;
  display: flex;
  align-items: center;
  gap: 14px;
  padding: 0 8px 0 24px;
}

.file-menu kbd {
  width: 55px;
  margin-left: auto;
  color: #999;
  font: inherit;
  text-align: left;
}

.file-menu .sub {
  margin-left: auto;
}

.file-menu hr {
  height: 1px;
  margin: 4px 0;
  border: none;
  background: #e3e3e3;
}

.file-menu .marked {
  background: #f2f2f2;
}

.file-menu .marked::after {
  content: "";
  position: absolute;
  inset: -6px 4px -1px 2px;
  border: 4px solid #ed1c24;
  border-radius: 2px;
}
```

FILE: palette.js
```js
const colors = `b5071a d9081e c94f78 e85360 ed6f6f e85f9e ea93bb f28e92 f48a9a ff9f7a
f3aa96 fcc0b8 e8d6ea ffd9e2 ffdce4 10204f 243a70 3f3279 0b478f 0068ab
3e60b0 5680c5 0081cf 008dd2 2fa9e1 00b4ef 33caff 89c0ea 9bd7ef cfeafa
004030 005a2f 006464 576b2c 088453 1f9640 0aab96 52c0c4 1ed0b0 45bb7e
00ae57 80bb0f a4d065 c0dd42 cfe9cb e44f1f f26700 f6830f f59652 faab00
faae00 ffbc38 fbc62b ffdb00 ffee00 f9f27c ffd470 efd295 ffdea6 fde8d0
7a2f74 844482 62418f 775099 9b699c a05a88 cd7cb0 ab92d2 c5a7cc edc3db
552a1b 743c30 94481f ad5a26 bf7d3b b6856b dfb77e d3c8b6 ccd0ca 000000
3b3b3b 595959 737373 8b8b8b a3a3a3 b8b8b8 cfcfcf dfe0e2 ececee`;
const recent = '9bc3ff d3e8fd b7d0fa e6f4ee fef3e8';
const theme = '7c48fb a8e142 35b48f f0c43e ff6790 5fa8f8 eb6f68 5ddacb 9263ff 55e3f0';

function fill(id, list) {
  const box = document.getElementById(id);
  list.split(/\s+/).forEach(c => {
    const i = document.createElement('i');
    i.style.background = '#' + c;
    box.appendChild(i);
  });
}

fill('swatches', colors);
fill('recent', recent);
fill('themeColors', theme);
```
